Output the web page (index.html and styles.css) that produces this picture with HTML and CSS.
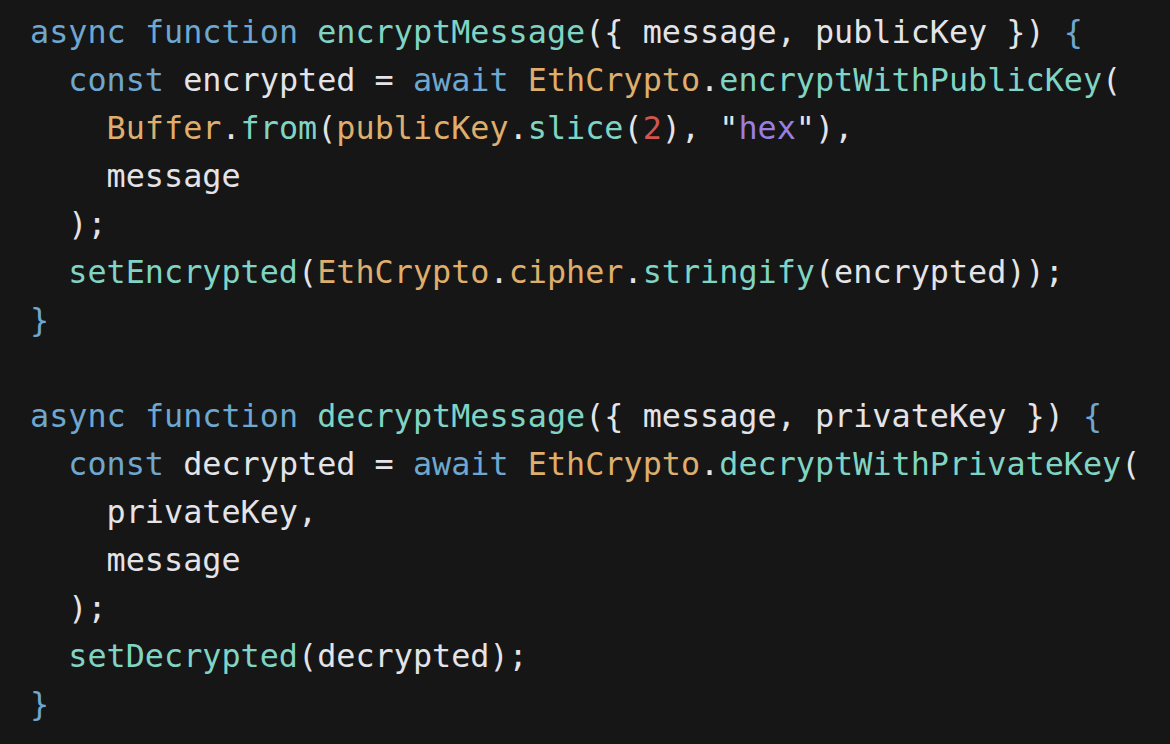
FILE: index.html
```html
<!DOCTYPE html>
<html>
<head>
<meta charset="utf-8">
<link rel="stylesheet" href="styles.css">
</head>
<body>
<pre class="code"><span class="kw">async</span> <span class="kw">function</span> <span class="fn">encryptMessage</span><span class="pl">({ message, publicKey })</span> <span class="kw">{</span>
  <span class="kw">const</span> <span class="pl">encrypted =</span> <span class="kw">await</span> <span class="ob">EthCrypto</span><span class="pl">.</span><span class="fn">encryptWithPublicKey</span><span class="pl">(</span>
    <span class="ob">Buffer</span><span class="pl">.</span><span class="fn">from</span><span class="pl">(</span><span class="ob">publicKey</span><span class="pl">.</span><span class="fn">slice</span><span class="pl">(</span><span class="num">2</span><span class="pl">), "</span><span class="str">hex</span><span class="pl">"),</span>
    <span class="pl">message</span>
  <span class="pl">);</span>
  <span class="fn">setEncrypted</span><span class="pl">(</span><span class="ob">EthCrypto</span><span class="pl">.</span><span class="ob">cipher</span><span class="pl">.</span><span class="fn">stringify</span><span class="pl">(encrypted));</span>
<span class="kw">}</span>

<span class="kw">async</span> <span class="kw">function</span> <span class="fn">decryptMessage</span><span class="pl">({ message, privateKey })</span> <span class="kw">{</span>
  <span class="kw">const</span> <span class="pl">decrypted =</span> <span class="kw">await</span> <span class="ob">EthCrypto</span><span class="pl">.</span><span class="fn">decryptWithPrivateKey</span><span class="pl">(</span>
    <span class="pl">privateKey,</span>
    <span class="pl">message</span>
  <span class="pl">);</span>
  <span class="fn">setDecrypted</span><span class="pl">(decrypted);</span>
<span class="kw">}</span></pre>
</body>
</html>
```
FILE: styles.css
```css
html, body {
  margin: 0;
  padding: 0;
  background: #161616;
  height: 100%;
}
.code {
  margin: 0;
  padding: 8px 0 0 30px;
  font-family: "DejaVu Sans Mono", "Liberation Mono", monospace;
  font-size: 31.8px;
  line-height: 48px;
  color: #e4e4e8;
  white-space: pre;
}
.kw { color: #6ea7cf; }
.fn { color: #80d4c3; }
.ob { color: #dfae6c; }
.pl { color: #e4e4e8; }
.num { color: #d0564f; }
.str { color: #9b7fe0; }
```
